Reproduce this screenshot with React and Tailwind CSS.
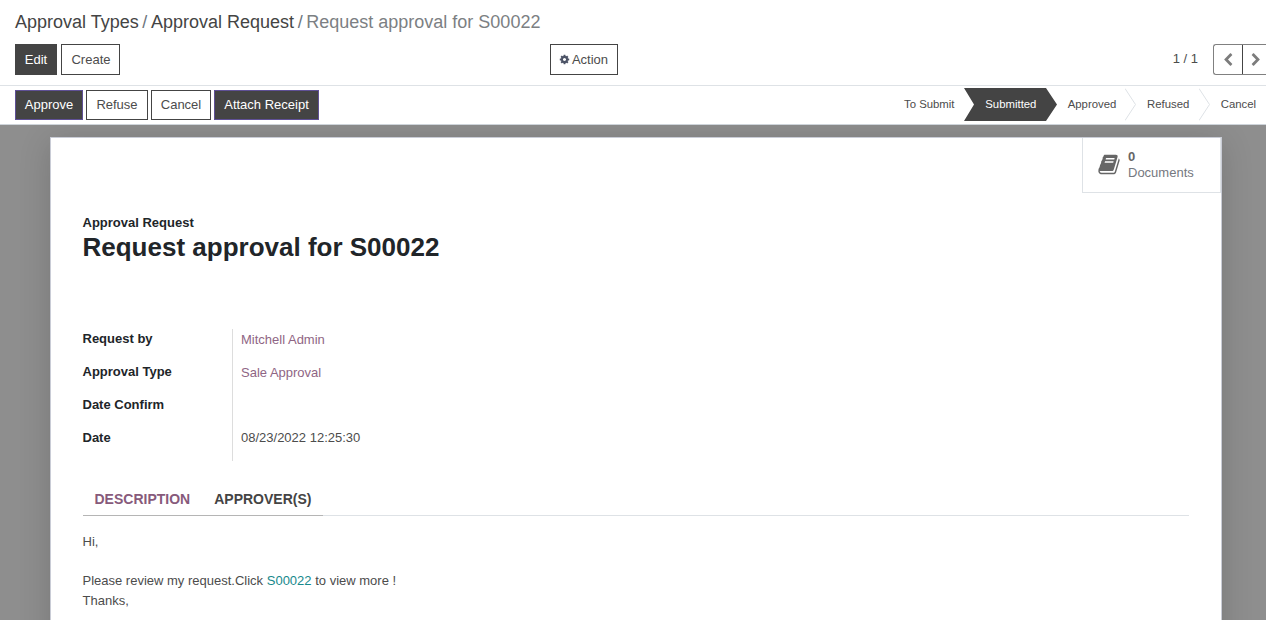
import React, { useState } from 'react';

const Icon = ({ d, className, viewBox = '0 0 1792 1792' }) => (
    <svg className={className} viewBox={viewBox} fill="currentColor" aria-hidden="true">
        <path d={d} />
    </svg>
);

const COG = 'M1152 896q0-106-75-181t-181-75-181 75-75 181 75 181 181 75 181-75 75-181zm512-109v222q0 12-8 23t-20 13l-185 28q-19 54-39 91 35 50 107 138 10 12 10 25t-9 23q-27 37-99 108t-94 71q-12 0-26-9l-138-108q-44 23-91 38-16 136-29 186-7 28-36 28h-222q-14 0-24.5-8.5t-11.5-21.5l-28-184q-49-16-90-37l-141 107q-10 9-25 9-14 0-25-11-126-114-165-168-7-10-7-23 0-12 8-23 15-21 51-66.5t54-70.5q-27-50-41-99l-183-27q-13-2-21-12.5t-8-23.5v-222q0-12 8-23t19-13l186-28q14-46 39-92-40-57-107-138-10-12-10-24 0-10 9-23 26-36 98.5-107.5t94.5-71.5q13 0 26 10l138 107q44-23 91-38 16-136 29-186 7-28 36-28h222q14 0 24.5 8.5t11.5 21.5l28 184q49 16 90 37l142-107q9-9 24-9 13 0 25 10 129 119 165 170 7 8 7 22 0 12-8 23-15 21-51 66.5t-54 70.5q26 50 41 98l183 28q13 2 21 12.5t8 23.5z';
const BOOK = 'M1639 478q40 57 18 129l-275 906q-19 64-76.5 107.5t-122.5 43.5h-923q-77 0-148.5-53.5t-99.5-131.5q-24-67-2-127 0-4 3-27t4-37q1-8-3-21.5t-3-19.5q2-11 8-21t16.5-23.5 16.5-23.5q23-38 45-91.5t30-91.5q3-10 .5-30t-.5-28q3-11 17-28t17-23q21-36 42-92t25-90q1-9-2.5-32t.5-28q4-13 22-30.5t22-22.5q19-26 42.5-84.5t27.5-96.5q1-8-3-25.5t-2-26.5q2-8 9-18t18-23 17-21q8-12 16.5-30.5t15-35 16-36 19.5-32 26.5-23.5 36-11.5 47.5 5.5l-1 3q38-9 51-9h761q74 0 114 56t18 130l-274 906q-36 119-71.5 153.5t-128.5 34.5h-869q-27 0-38 15-11 16-1 43 24 70 144 70h923q29 0 56-15.5t35-41.5l300-987q7-22 5-57 38 15 59 43zm-1064 2q-4 13 2 22.5t20 9.5h608q13 0 25.5-9.5t16.5-22.5l21-64q4-13-2-22.5t-20-9.5h-608q-13 0-25.5 9.5t-16.5 22.5zm-83 256q-4 13 2 22.5t20 9.5h608q13 0 25.5-9.5t16.5-22.5l21-64q4-13-2-22.5t-20-9.5h-608q-13 0-25.5 9.5t-16.5 22.5z';
const CHEVRON_LEFT = 'M1427 301l-531 531 531 531q19 19 19 45t-19 45l-166 166q-19 19-45 19t-45-19l-742-742q-19-19-19-45t19-45l742-742q19-19 45-19t45 19l166 166q19 19 19 45t-19 45z';
const CHEVRON_RIGHT = 'M1363 877l-742 742q-19 19-45 19t-45-19l-166-166q-19-19-19-45t19-45l531-531-531-531q-19-19-19-45t19-45l166-166q19-19 45-19t45 19l742 742q19 19 19 45t-19 45z';

const actions = [
    { label: 'Approve', primary: true, width: 'w-[68px]' },
    { label: 'Refuse', primary: false, width: 'w-[62px]' },
    { label: 'Cancel', primary: false, width: 'w-[60px]' },
    { label: 'Attach Receipt', primary: true, width: 'w-[105px]' },
];

const fields = [
    { label: 'Request by', value: 'Mitchell Admin', link: true },
    { label: 'Approval Type', value: 'Sale Approval', link: true },
    { label: 'Date Confirm', value: '' },
    { label: 'Date', value: '08/23/2022 12:25:30' },
];

const Separator = () => (
    <svg className="h-[33px] w-3 shrink-0" viewBox="0 0 12 33" fill="none" stroke="#dee2e6">
        <path d="M0 0.5L10.5 16.5L0 32.5" />
    </svg>
);

const ControlPanel = () => (
    <header className="h-[86px] border-b border-[#dee2e6] bg-white">
        <nav className="flex h-11 items-center gap-[3.6px] pt-px pl-[15px] text-[18px] whitespace-nowrap text-[#444]">
            <a>Approval Types</a>
            <span className="text-[#6c757d]">/</span>
            <a>Approval Request</a>
            <span className="text-[#6c757d]">/</span>
            <span className="text-[#7c7f83]">Request approval for S00022</span>
        </nav>
        <div className="flex h-[31px] pl-[15px]">
            <div className="flex w-[535px] gap-1">
                <button className="w-[42px] border border-[#444] bg-[#444] text-white">Edit</button>
                <button className="w-[59px] border border-[#444] pl-px">Create</button>
            </div>
            <button className="flex w-[68px] items-center justify-center gap-0.5 border border-[#444] pr-px">
                <Icon d={COG} className="h-[11px] w-[11px] text-[#4c5366]" />
                Action
            </button>
            <div className="ml-auto flex">
                <span className="mr-[15px] leading-[30px]">1 / 1</span>
                <button className="flex w-[30px] items-center justify-center rounded-l-[3px] border border-[#808080] border-r-[#444] text-[#7c7c7c]">
                    <Icon d={CHEVRON_LEFT} className="h-[14px] w-[14px]" />
                </button>
                <button className="flex w-[23px] items-center justify-center border-y border-[#808080] pl-[3px] text-[#7c7c7c]">
                    <Icon d={CHEVRON_RIGHT} className="h-[14px] w-[14px]" />
                </button>
            </div>
        </div>
    </header>
);

const StatusBar = () => (
    <div className="flex h-[39px] justify-between border-b border-[#ced4da] bg-white pl-[15px]">
        <div className="flex items-center gap-[3px]">
            {actions.map(({ label, primary, width }) => (
                <button
                    key={label}
                    className={`h-[30px] border whitespace-nowrap ${width} ${primary
                        ? 'border-[#5f5096] bg-[#444] text-white'
                        : 'border-[#444] bg-white'
                        }`}
                >
                    {label}
                </button>
            ))}
        </div>
        <div className="flex pt-0.5 text-[11.375px] leading-[33px] whitespace-nowrap">
            <span className="w-[60px]">To Submit</span>
            <span className="h-[33px] w-[93px] bg-[#444] pl-[21.3px] text-white [clip-path:polygon(0_0,82px_0,100%_50%,82px_100%,0_100%,10px_50%)]">
                Submitted
            </span>
            <span className="w-[68px] pl-[10.7px]">Approved</span>
            <Separator />
            <span className="w-[62px] pl-[10px]">Refused</span>
            <Separator />
            <span className="w-[55px] pl-[9.7px]">Cancel</span>
        </div>
    </div>
);

const App = () => {
    const [tab, setTab] = useState('DESCRIPTION');

    return (
        <div className="flex h-screen flex-col overflow-hidden bg-[#8e8e8e] font-['Liberation_Sans',Arial,sans-serif] text-[13px] leading-[19.5px] text-[#4c4c4c]">
            <ControlPanel />
            <StatusBar />

            <main className="min-h-0 flex-1 overflow-hidden pt-3 pr-11 pl-[50px]">
                <div className="h-[600px] border border-[#c9ccd6] bg-white shadow-[0_5px_30px_rgba(0,0,0,0.16)]">
                    {/* Stat button */}
                    <div className="flex justify-end">
                        <button className="flex h-[55px] w-[139px] items-center border-r border-b border-l border-[#dee2e6] pl-[15px] text-left">
                            <Icon d={BOOK} viewBox="0 0 1664 1792" className="mb-px h-[23px] w-[22px] text-[#666]" />
                            <span className="flex flex-col pl-2 leading-4 text-[#757880]">
                                <b className="text-[#666]">0</b>
                                <span>Documents</span>
                            </span>
                        </button>
                    </div>

                    <div className="pr-8 pl-[31.5px]">
                        <div className="pt-5 font-bold text-[#212529]">Approval Request</div>
                        <h1 className="text-[26px] leading-[29px] font-bold text-[#212529]">Request approval for S00022</h1>

                        <div className="mt-[67px] flex flex-col">
                            {fields.map(({ label, value, link }) => (
                                <div key={label} className="flex h-[33px]">
                                    <div className="w-[149.5px] font-bold text-[#212529]">{label}</div>
                                    <div className={`border-l border-[#ddd] pl-2 ${link ? 'pt-px text-[#8f6584]' : ''}`}>{value}</div>
                                </div>
                            ))}
                        </div>

                        {/* Tabs */}
                        <div className="mt-[22px] flex h-[33px] border-b border-[#dee2e6] text-[14px] leading-[33px] font-bold">
                            {['DESCRIPTION', 'APPROVER(S)'].map((name) => (
                                <button
                                    key={name}
                                    onClick={() => setTab(name)}
                                    className={`h-[33px] border-b border-[#b5b5b5] px-3 ${tab === name ? 'text-[#875a7b]' : 'text-[#444]'}`}
                                >
                                    {name}
                                </button>
                            ))}
                        </div>

                        <div className="pt-[16.5px]">
                            <p>Hi,</p>
                            <br />
                            <p>Please review my request.Click <a className="text-[#17898c]">S00022</a> to view more !</p>
                            <p>Thanks,</p>
                        </div>
                    </div>
                </div>
            </main>
        </div>
    );
};

export default App;
